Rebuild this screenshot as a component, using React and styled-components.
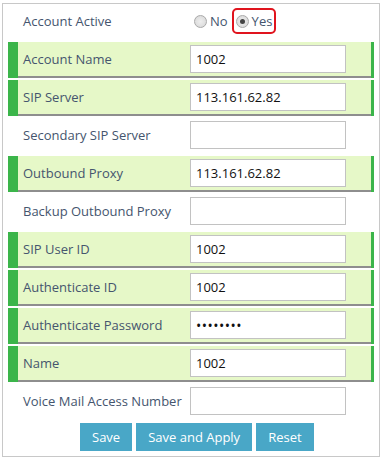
import React from "react";
import styled, { createGlobalStyle } from "styled-components";

const GlobalStyle = createGlobalStyle`
  body {
    margin: 0;
    background: #fff;
    font-family: "Open Sans", "Liberation Sans", sans-serif;
  }
`;

const Panel = styled.form`
  box-sizing: border-box;
  width: 378px;
  height: 454px;
  margin: 3px 0 0 2px;
  padding: 0 5px;
  border: 1px solid #c8c8c8;
`;

const Row = styled.div`
  box-sizing: border-box;
  display: flex;
  align-items: center;
  height: 36px;
  margin-bottom: 2px;
  border-left: 10px solid ${p => (p.highlight ? "#3bb54a" : "transparent")};
  border-right: 3px solid ${p => (p.highlight ? "#3bb54a" : "transparent")};
  background: ${p => (p.highlight ? "#e6f8c8" : "transparent")};
  box-shadow: ${p => (p.highlight ? "inset 0 -2px 0 #8e8e8e" : "none")};
  padding-bottom: 2px;
`;

const Label = styled.label`
  width: 172px;
  flex: none;
  box-sizing: border-box;
  padding-left: 5px;
  font-size: 13px;
  color: #45556e;
  white-space: nowrap;
`;

const Input = styled.input`
  box-sizing: border-box;
  width: 156px;
  height: 28px;
  margin: 0;
  padding: 0 5px;
  border: 1px solid #c2c2c2;
  background: #fff;
  font-family: "Open Sans", "Liberation Sans", sans-serif;
  font-size: 13px;
  color: #111;
  outline: none;

  &[type="password"] {
    font-size: 14px;
    letter-spacing: 0.5px;
  }
`;

const Radios = styled.div`
  display: flex;
  align-items: center;
  margin-left: 4px;
  font-size: 13px;
  color: #45556e;
`;

const RadioLabel = styled.span`
  display: inline-flex;
  align-items: center;
  gap: 3px;
  box-sizing: border-box;
  height: 26px;
  padding: 0 2px;
  border: 2px solid ${p => (p.marked ? "#e0141e" : "transparent")};
  border-radius: 5px;
  margin-left: ${p => (p.marked ? "0" : "-4px")};
`;

const Dot = styled.span`
  box-sizing: border-box;
  width: 13px;
  height: 13px;
  border-radius: 50%;
  border: 1px solid #a9a9a9;
  background: radial-gradient(circle, #eee 0%, #d6d6d6 100%);
  display: inline-flex;
  align-items: center;
  justify-content: center;

  &::after {
    content: "";
    width: 5px;
    height: 5px;
    border-radius: 50%;
    background: ${p => (p.checked ? "#444" : "transparent")};
  }
`;

const Buttons = styled.div`
  display: flex;
  gap: 4px;
  padding: 1px 0 0 72px;
`;

const Button = styled.button`
  height: 28px;
  padding: 0 12px;
  border: none;
  background: #49a7c7;
  color: #fff;
  font-family: "Open Sans", "Liberation Sans", sans-serif;
  font-size: 13px;
`;

const fields = [
  { label: "Account Name", value: "1002", highlight: true },
  { label: "SIP Server", value: "113.161.62.82", highlight: true },
  { label: "Secondary SIP Server", value: "" },
  { label: "Outbound Proxy", value: "113.161.62.82", highlight: true },
  { label: "Backup Outbound Proxy", value: "" },
  { label: "SIP User ID", value: "1002", highlight: true },
  { label: "Authenticate ID", value: "1002", highlight: true },
  { label: "Authenticate Password", value: "12345678", highlight: true, type: "password" },
  { label: "Name", value: "1002", highlight: true },
  { label: "Voice Mail Access Number", value: "" }
];

export default function App() {
  return (
    <>
      <GlobalStyle />
      <Panel onSubmit={e => e.preventDefault()}>
        <Row>
          <Label>Account Active</Label>
          <Radios>
            <RadioLabel>
              <Dot />
              No
            </RadioLabel>
            <RadioLabel marked>
              <Dot checked />
              Yes
            </RadioLabel>
          </Radios>
        </Row>
        {fields.map(f => (
          <Row key={f.label} highlight={f.highlight}>
            <Label>{f.label}</Label>
            <Input type={f.type || "text"} defaultValue={f.value} />
          </Row>
        ))}
        <Buttons>
          <Button type="button">Save</Button>
          <Button type="button">Save and Apply</Button>
          <Button type="button">Reset</Button>
        </Buttons>
      </Panel>
    </>
  );
}
